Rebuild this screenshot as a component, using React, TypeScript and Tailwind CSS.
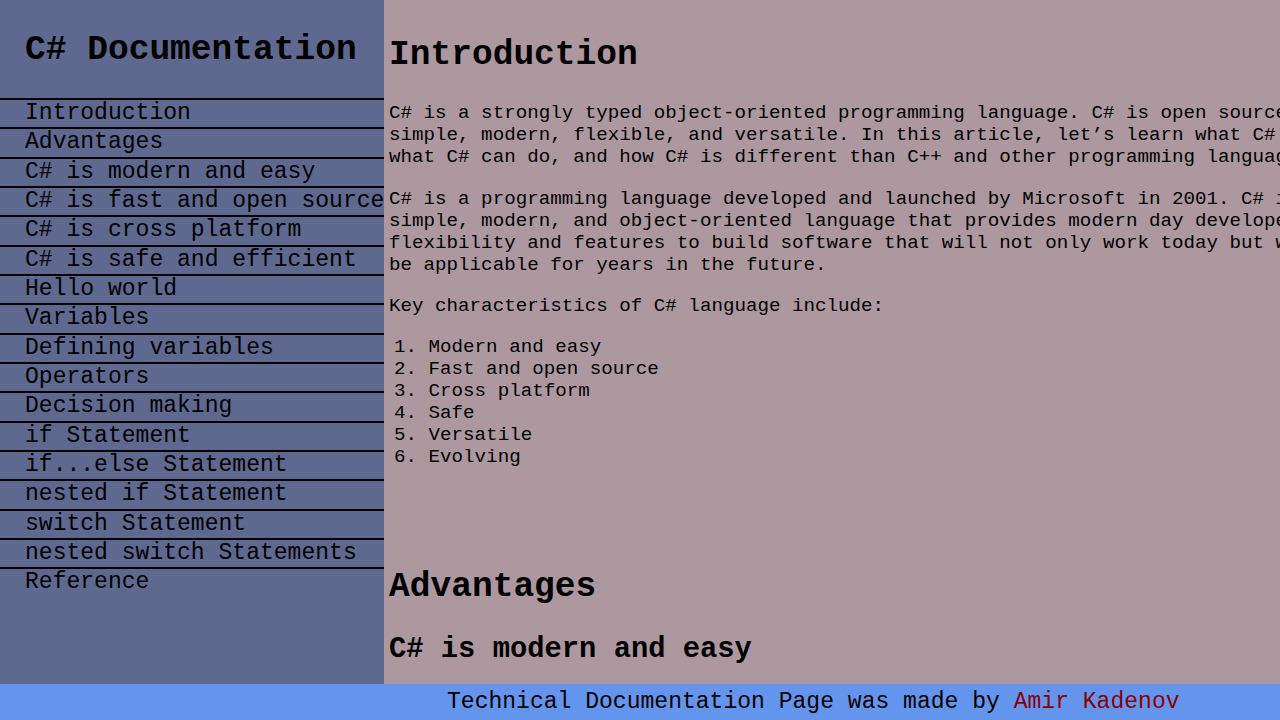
import React from 'react';

const navItems = [
    'Introduction',
    'Advantages',
    'C# is modern and easy',
    'C# is fast and open source',
    'C# is cross platform',
    'C# is safe and efficient',
    'Hello world',
    'Variables',
    'Defining variables',
    'Operators',
    'Decision making',
    'if Statement',
    'if...else Statement',
    'nested if Statement',
    'switch Statement',
    'nested switch Statements',
    'Reference',
];

const traits = [
    'Modern and easy',
    'Fast and open source',
    'Cross platform',
    'Safe',
    'Versatile',
    'Evolving',
];

const App: React.FC = () => {
    return (
        <div className="h-screen flex flex-col overflow-hidden text-black font-['Liberation_Mono','DejaVu_Sans_Mono',monospace]">
            <div className="flex flex-1 min-h-0">

                {/* Sidebar */}
                <nav className="w-[384px] shrink-0 bg-[#5f6990] overflow-hidden">
                    <h1 className="h-[98px] pt-[30px] pl-[25px] text-[34.56px] leading-[39px] font-bold whitespace-nowrap">
                        C# Documentation
                    </h1>
                    <ul>
                        {navItems.map(item => (
                            <li
                                key={item}
                                className="border-t-2 border-black pl-[25px] text-[23.04px] leading-[27.33px] whitespace-nowrap"
                            >
                                {item}
                            </li>
                        ))}
                    </ul>
                </nav>

                {/* Main content */}
                <main className="flex-1 min-w-0 bg-[#ad98a0] pl-[5px] overflow-hidden">
                    <div className="w-[955px] text-[19.2px] leading-[22px]">
                        <section className="h-[567px]">
                            <h2 className="pt-[35px] text-[34.56px] leading-[39px] font-bold">Introduction</h2>
                            <p className="mt-[28px]">
                                C# is a strongly typed object-oriented programming language. C# is open source, simple, modern, flexible, and versatile. In this article, let’s learn what C# is, what C# can do, and how C# is different than C++ and other programming languages.
                            </p>
                            <p className="mt-[20px]">
                                C# is a programming language developed and launched by Microsoft in 2001. C# is a simple, modern, and object-oriented language that provides modern day developers flexibility and features to build software that will not only work today but will be applicable for years in the future.
                            </p>
                            <p className="mt-[19px]">Key characteristics of C# language include:</p>
                            <ol className="mt-[19px] list-decimal list-inside pl-[5px]">
                                {traits.map(t => (
                                    <li key={t}>{t}</li>
                                ))}
                            </ol>
                        </section>
                        <section>
                            <h2 className="text-[34.56px] leading-[39px] font-bold">Advantages</h2>
                            <h3 className="mt-[27px] text-[28.8px] leading-[33px] font-bold">C# is modern and easy</h3>
                        </section>
                    </div>
                </main>
            </div>

            {/* Footer */}
            <footer className="h-[36px] shrink-0 bg-[#6495ed] flex items-center pl-[447px] text-[23.04px] whitespace-nowrap">
                Technical Documentation Page was made by&nbsp;<span className="text-[#8b0000]">Amir Kadenov</span>
            </footer>
        </div>
    );
};

export default App;
